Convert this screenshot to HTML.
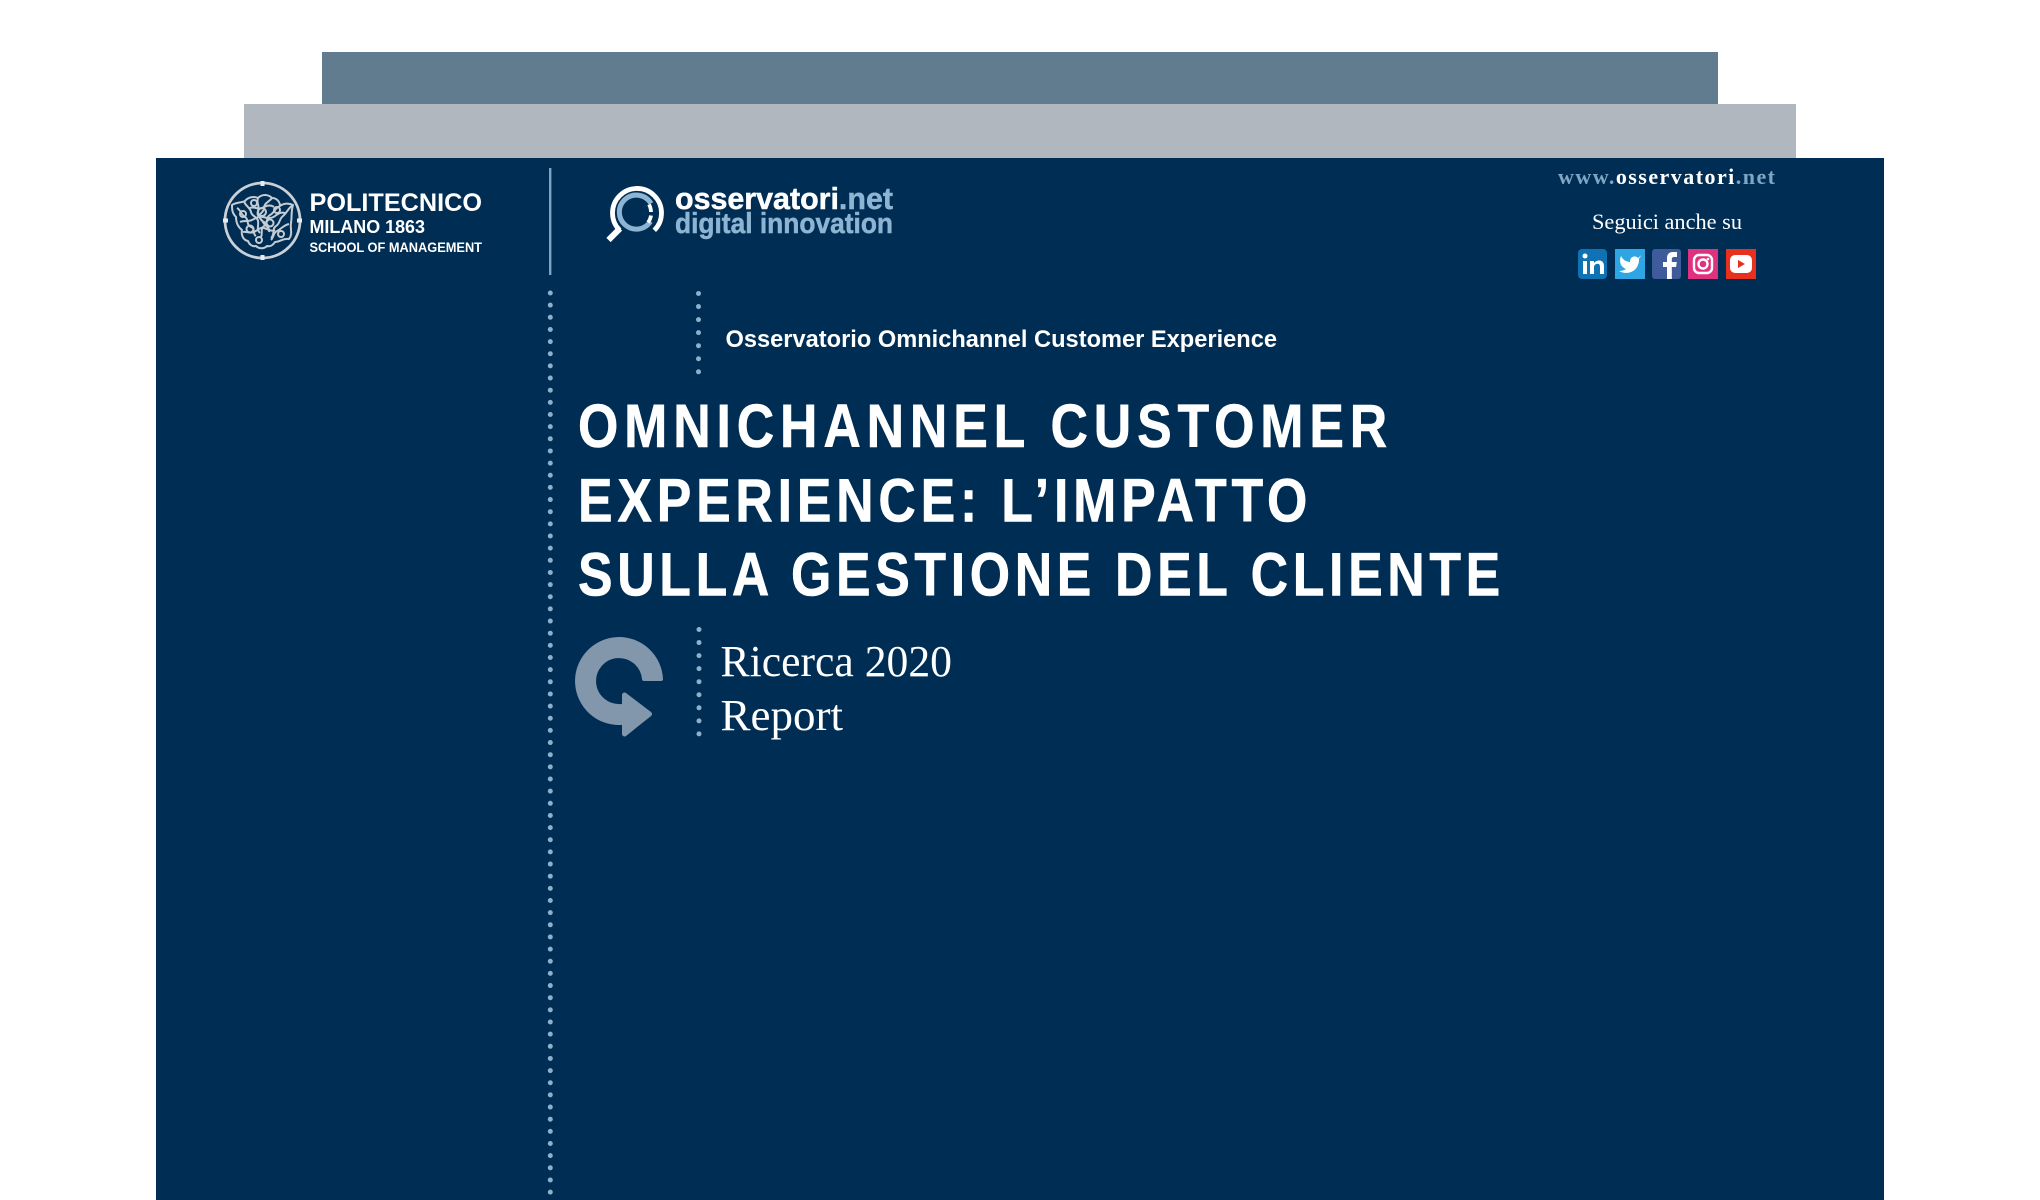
<!DOCTYPE html>
<html lang="it"><head><meta charset="utf-8"><title>Omnichannel Customer Experience</title>
<style>
html,body{margin:0;padding:0;background:#fff;width:2040px;height:1200px;overflow:hidden}
svg{display:block}
.s{font-family:"Liberation Sans",sans-serif}
.f{font-family:"Liberation Serif",serif}
</style></head><body>
<svg width="2040" height="1200" viewBox="0 0 2040 1200" xmlns="http://www.w3.org/2000/svg">
<rect x="322" y="52" width="1396" height="52" fill="#607c8e"/>
<rect x="244" y="104" width="1552" height="54" fill="#b0b7be"/>
<rect x="156" y="158" width="1728" height="1042" fill="#002d53"/>

<!-- Politecnico seal -->
<circle cx="262.500" cy="220.500" r="37.500" fill="none" stroke="#c9d0d7" stroke-width="2.800"/>
<g fill="none" stroke="#c4ccd4" stroke-width="2" stroke-linejoin="round">
<path d="M232 205c4-3 9-2 13-4 3-4 9-5 13-3 4-4 10-4 14 0 5 0 8 4 8 8 4-3 9-3 13-1-2 6-1 12-2 18-1 6 2 11-2 16-6-1-9 3-14 3-2 3-5 5-8 4-3 3-8 3-11 0-4 1-7-2-8-5-5-1-7-6-6-11-4-3-6-8-6-13-4-4-4-8-4-12z"/>
<path d="M237 208c4 2 4 7 8 9s1 8 6 10 1 7 5 9M244 201c1 5 6 6 7 11s6 4 7 9-2 8 2 12M258 198c-2 5 2 8 0 13s3 7 5 11 7 5 6 10M272 198c-3 4-8 5-8 10s-6 5-4 10 6 3 8 8M280 206c-5 2-6 7-10 9s-2 8-6 11-1 7-3 11"/>
<path d="M293 205c-5 3-6 8-10 11s-3 8-7 10-1 9-5 12M289 224c-5 1-8 5-12 7s-3 6-6 9M240 222c4-2 8 0 12-2s7-4 11-3 8 2 12-1 6-4 10-3M243 232c4-1 7 2 11 0s6-5 10-4 7 4 11 2M250 208c4-2 8 2 12 0s8-4 12-1"/>
<circle cx="262" cy="212" r="4"/><circle cx="270" cy="223" r="3.500"/><circle cx="250" cy="229" r="3.500"/><circle cx="277" cy="210" r="3"/><circle cx="254" cy="203" r="3"/><circle cx="243" cy="214" r="3"/><circle cx="281" cy="234" r="3"/><circle cx="259" cy="240" r="3"/>
</g>
<g fill="#e8ecef"><rect x="260.500" y="181" width="4" height="5"/><rect x="260.500" y="255" width="4" height="5"/><rect x="223" y="218.500" width="5" height="4"/><rect x="297" y="218.500" width="5" height="4"/></g>
<g class="s" fill="#fff" font-weight="700">
<text x="309.500" y="211" font-size="25" textLength="172.500" lengthAdjust="spacingAndGlyphs">POLITECNICO</text>
<text x="309.500" y="233" font-size="18" textLength="115.500" lengthAdjust="spacingAndGlyphs">MILANO 1863</text>
<text x="309.500" y="252" font-size="13.500" textLength="172.500" lengthAdjust="spacingAndGlyphs">SCHOOL OF MANAGEMENT</text>
</g>

<rect x="549" y="168" width="2.400" height="107" fill="#7fa3c1"/>

<!-- Osservatori logo -->
<g fill="none">
<path d="M650.500 221.500A17 17 0 1 1 651 203.500" stroke="#8db4d3" stroke-width="5"/>
<path d="M649 204.500A15.500 15.500 0 0 1 651 212M651 215.500A15.500 15.500 0 0 1 648 222.500" stroke="#fff" stroke-width="3.800"/>
<path d="M654.300 230.300A24.500 24.500 0 1 0 619.700 230.300" stroke="#fff" stroke-width="4.800"/>
<path d="M620 228.500L608.500 240" stroke="#fff" stroke-width="6"/>
</g>
<g class="s" font-weight="700" font-size="31" stroke-width=".5">
<text x="675" y="209" textLength="218" lengthAdjust="spacingAndGlyphs" fill="#fff" stroke="#fff">osservatori<tspan fill="#8db4d3" stroke="#8db4d3">.net</tspan></text>
<text x="675" y="233" textLength="218" lengthAdjust="spacingAndGlyphs" fill="#8db4d3" stroke="#8db4d3" font-size="29">digital innovation</text>
</g>

<!-- Top right -->
<text class="f" x="1558" y="184" font-size="22" font-weight="700" textLength="217" lengthAdjust="spacing" fill="#fff"><tspan fill="#7fa6c4">www.</tspan>osservatori<tspan fill="#7fa6c4">.net</tspan></text>
<text class="f" x="1592" y="229" font-size="22.500" textLength="150" lengthAdjust="spacingAndGlyphs" fill="#fff">Seguici anche su</text>

<!-- Social -->
<rect x="1578" y="249" width="29" height="30" rx="4" fill="#0f72b4"/>
<g fill="#fff"><rect x="1583" y="261" width="4" height="13"/><circle cx="1585" cy="256" r="2.500"/>
<path d="M1590 261h4v2c1-1.500 3-2.500 5-2.500 4 0 5 3 5 6v7.500h-4v-7c0-2-.6-3.300-2.300-3.300-2 0-3.700 1.500-3.700 3.500v6.800h-4z"/></g>
<rect x="1615" y="249" width="30" height="30" fill="#2fa5e3"/>
<path transform="translate(1618,252)" fill="#fff" d="M23 3a10.900 10.900 0 0 1-3 3 4.480 4.480 0 0 0-7.860 3v1A10.660 10.660 0 0 1 3 4s-4 9 5 13a11.640 11.640 0 0 1-7 2c9 5 20 0 20-11.500a4.500 4.500 0 0 0-.08-.83A7.720 7.720 0 0 0 23 3z"/>
<rect x="1652" y="249" width="29" height="30" rx="3" fill="#3f5b9c"/>
<path fill="#fff" d="M1667 279v-12h-4v-5h4v-4c0-4 2.500-6 6-6h4v5h-3c-1.500 0-2.200.8-2.200 2.200v2.800h5l-.7 5h-4.300v12z"/>
<rect x="1688" y="249" width="30" height="30" fill="#e0317f"/>
<g fill="none" stroke="#fff" stroke-width="2.400"><rect x="1694" y="255" width="18" height="18" rx="5"/><circle cx="1703" cy="264" r="4.500"/></g><circle cx="1708" cy="259" r="1.300" fill="#fff"/>
<rect x="1726" y="249" width="30" height="30" fill="#e8301f"/>
<rect x="1730" y="255" width="22" height="18" rx="5" fill="#fff"/><path d="M1738 260l7 4-7 4z" fill="#e8301f"/>

<!-- Dotted lines -->
<line x1="550.300" y1="293" x2="550.300" y2="1196" stroke="#8db0cc" stroke-width="5" stroke-linecap="round" stroke-dasharray="0 12.150"/>
<line x1="698.500" y1="293.500" x2="698.500" y2="374" stroke="#8db0cc" stroke-width="5" stroke-linecap="round" stroke-dasharray="0 13.050"/>
<line x1="699" y1="629.500" x2="699" y2="736" stroke="#8db0cc" stroke-width="5" stroke-linecap="round" stroke-dasharray="0 13.050"/>

<text class="s" x="725.500" y="347" font-size="24" font-weight="700" fill="#fff" textLength="551.500" lengthAdjust="spacingAndGlyphs">Osservatorio Omnichannel Customer Experience</text>

<g class="s" font-weight="700" font-size="61" fill="#fff" stroke="#fff" stroke-width=".6">
<text transform="translate(578,447) scale(.85,1)" textLength="952" lengthAdjust="spacing">OMNICHANNEL CUSTOMER</text>
<text transform="translate(578,521.500) scale(.85,1)" textLength="858" lengthAdjust="spacing">EXPERIENCE: L’IMPATTO</text>
<text transform="translate(578,595.500) scale(.85,1)" textLength="1085" lengthAdjust="spacing">SULLA GESTIONE DEL CLIENTE</text>
</g>

<!-- Arrow icon -->
<path d="M661 679A42 42 0 1 0 621 723L621 706A25 25 0 1 1 644 679Z" fill="#8297ab" stroke="#8297ab" stroke-width="4" stroke-linejoin="round"/>
<path d="M624.500 695L649.500 714L624.500 734Z" fill="#8297ab" stroke="#8297ab" stroke-width="5" stroke-linejoin="round"/>

<text class="f" x="720.500" y="676" font-size="44" fill="#fff" textLength="231.500" lengthAdjust="spacingAndGlyphs">Ricerca 2020</text>
<text class="f" x="720.500" y="730" font-size="44" fill="#fff" textLength="122.500" lengthAdjust="spacingAndGlyphs">Report</text>
</svg>
</body></html>
